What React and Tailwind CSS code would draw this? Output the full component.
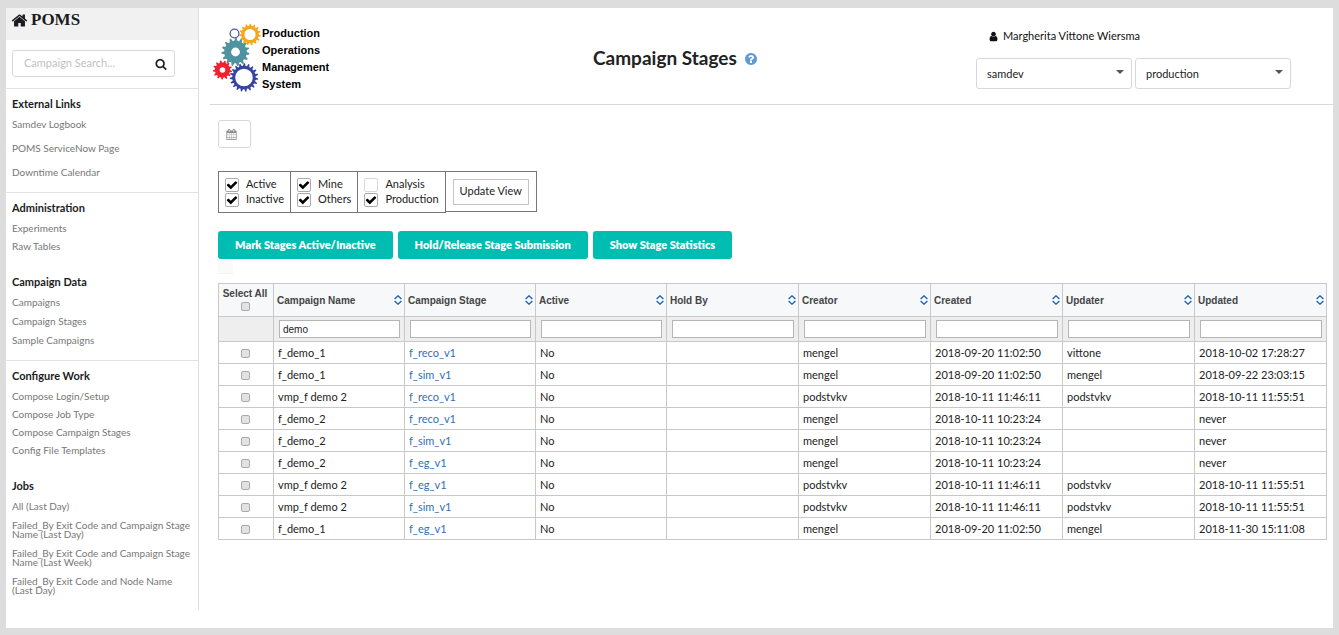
import React from 'react';

const PATHS = {
  home: 'M1472 992v480q0 26-19 45t-45 19h-384v-384h-256v384h-384q-26 0-45-19t-19-45v-480q0-1 .5-3t.5-3l575-474 575 474q1 2 1 6zm223-69l-62 74q-8 9-21 11h-3q-13 0-21-7l-692-577-692 577q-12 8-24 7-13-2-21-11l-62-74q-8-10-7-23.5t11-21.5l719-599q32-26 76-26t76 26l244 204v-195q0-14 9-23t23-9h192q14 0 23 9t9 23v408l219 182q10 8 11 21.5t-7 23.5z',
  search: 'M1216 832q0-185-131.5-316.5t-316.5-131.5-316.5 131.5-131.5 316.5 131.5 316.5 316.5 131.5 316.5-131.5 131.5-316.5zm512 832q0 52-38 90t-90 38q-54 0-90-38l-343-342q-179 124-399 124-143 0-273.5-55.5t-225-150-150-225-55.5-273.5 55.5-273.5 150-225 225-150 273.5-55.5 273.5 55.5 225 150 150 225 55.5 273.5q0 220-124 399l343 343q37 37 37 90z',
  user: 'M1536 1399q0 109-62.5 187t-150.5 78h-854q-88 0-150.5-78t-62.5-187q0-85 8.5-160.5t31.5-152 58.5-131 94-89 134.5-34.5q131 128 313 128t313-128q76 0 134.5 34.5t94 89 58.5 131 31.5 152 8.5 160.5zm-256-887q0 159-112.5 271.5t-271.5 112.5-271.5-112.5-112.5-271.5 112.5-271.5 271.5-112.5 271.5 112.5 112.5 271.5z',
  help: 'M1024 1376v-192q0-14-9-23t-23-9h-192q-14 0-23 9t-9 23v192q0 14 9 23t23 9h192q14 0 23-9t9-23zm256-672q0-88-55.5-163t-138.5-116-170-41q-243 0-371 213-15 24 8 42l132 100q7 6 19 6 16 0 25-12 53-68 86-92 34-24 86-24 48 0 85.5 26t37.5 59q0 38-20 61t-68 45q-63 28-115.5 86.5t-52.5 125.5v36q0 14 9 23t23 9h192q14 0 23-9t9-23q0-19 21.5-49.5t54.5-49.5q32-18 49-28.5t46-35 44.5-48 28-60.5 12.5-81zm384 192q0 209-103 385.5t-279.5 279.5-385.5 103-385.5-103-279.5-279.5-103-385.5 103-385.5 279.5-279.5 385.5-103 385.5 103 279.5 279.5 103 385.5z',
  calendar: 'M192 1664h288v-288h-288v288zm352 0h320v-288h-320v288zm-352-352h288v-320h-288v320zm352 0h320v-320h-320v320zm-352-384h288v-288h-288v288zm736 736h320v-288h-320v288zm-384-736h320v-288h-320v288zm768 736h288v-288h-288v288zm-384-352h320v-320h-320v320zm-352-864v-288q0-13-9.5-22.5t-22.5-9.5h-64q-13 0-22.5 9.5t-9.5 22.5v288q0 13 9.5 22.5t22.5 9.5h64q13 0 22.5-9.5t9.5-22.5zm736 864h288v-320h-288v320zm-384-384h320v-288h-320v288zm384 0h288v-288h-288v288zm32-480v-288q0-13-9.5-22.5t-22.5-9.5h-64q-13 0-22.5 9.5t-9.5 22.5v288q0 13 9.5 22.5t22.5 9.5h64q13 0 22.5-9.5t9.5-22.5zm384-64v1280q0 52-38 90t-90 38h-1408q-52 0-90-38t-38-90v-1280q0-52 38-90t90-38h128v-96q0-66 47-113t113-47h64q66 0 113 47t47 113v96h384v-96q0-66 47-113t113-47h64q66 0 113 47t47 113v96h128q52 0 90 38t38 90z',
  check: 'M1671 566q0 40-28 68l-724 724-136 136q-28 28-68 28t-68-28l-136-136-362-362q-28-28-28-68t28-68l136-136q28-28 68-28t68 28l294 295 656-657q28-28 68-28t68 28l136 136q28 28 28 68z',
};

function Icon({ name, className }) {
  return (
    <svg viewBox="0 0 1792 1792" fill="currentColor" aria-hidden="true" className={className}>
      <path d={PATHS[name]} />
    </svg>
  );
}

function gearPath(cx, cy, outer, root, hole, teeth) {
  const pt = (r, a) => `${(cx + r * Math.cos(a)).toFixed(2)} ${(cy + r * Math.sin(a)).toFixed(2)}`;
  const step = (Math.PI * 2) / teeth;
  let d = '';
  for (let i = 0; i < teeth; i++) {
    const a = i * step;
    d += `${i ? 'L' : 'M'}${pt(root, a)}L${pt(outer, a + step * 0.2)}L${pt(outer, a + step * 0.45)}L${pt(root, a + step * 0.65)}`;
  }
  return `${d}ZM${cx - hole} ${cy}a${hole} ${hole} 0 1 0 ${hole * 2} 0a${hole} ${hole} 0 1 0 ${-hole * 2} 0Z`;
}

function Gears() {
  return (
    <svg viewBox="0 0 48 70" className="h-[70px] w-12 shrink-0" fillRule="evenodd" aria-hidden="true">
      <path d={gearPath(37, 10.5, 10.8, 8.8, 5.6, 15)} fill="#f5a81c" />
      <circle cx="21.5" cy="9.5" r="4.4" fill="none" stroke="#4a5da8" strokeWidth="1.3" />
      <path d={gearPath(22.5, 28, 14, 11.3, 4.4, 15)} fill="#4f93a0" />
      <path d={gearPath(9.5, 46, 9.6, 7.6, 2.8, 13)} fill="#f5202f" />
      <path d={gearPath(31, 53.5, 14.2, 11.7, 8.8, 19)} fill="#3444a0" />
    </svg>
  );
}

const NAV = [
  [
    {
      title: 'External Links',
      gap: 'gap-[15px]',
      links: ['Samdev Logbook', 'POMS ServiceNow Page', 'Downtime Calendar'],
    },
  ],
  [
    { title: 'Administration', gap: 'gap-[9px]', links: ['Experiments', 'Raw Tables'] },
    { title: 'Campaign Data', gap: 'gap-2.5', links: ['Campaigns', 'Campaign Stages', 'Sample Campaigns'] },
  ],
  [
    {
      title: 'Configure Work',
      gap: 'gap-[9px]',
      links: ['Compose Login/Setup', 'Compose Job Type', 'Compose Campaign Stages', 'Config File Templates'],
    },
    {
      title: 'Jobs',
      gap: 'gap-2.5',
      links: [
        'All (Last Day)',
        'Failed_By Exit Code and Campaign Stage Name (Last Day)',
        'Failed_By Exit Code and Campaign Stage Name (Last Week)',
        'Failed_By Exit Code and Node Name (Last Day)',
      ],
    },
  ],
];

function Sidebar() {
  return (
    <aside className="mb-[18px] w-[193px] shrink-0 border-r border-[#dedede]">
      <a href="#home" className="flex h-8 items-center gap-[3px] bg-[#f1f1f1] pb-2 pl-[5px] text-[#1b1c1d]">
        <Icon name="home" className="size-[17px]" />
        <span className="font-['Liberation_Serif',serif] text-[17px] font-bold">POMS</span>
      </a>
      <form className="mx-1.5 mt-2.5 mb-[11px] flex h-[27px] w-[163px] items-center rounded-[3px] border border-[#d8d8d8] pr-[7px]">
        <input
          type="text"
          aria-label="Campaign Search"
          placeholder="Campaign Search..."
          className="w-full min-w-0 flex-1 bg-transparent pl-[11px] text-[11px] outline-none placeholder:text-[#bfbfbf]"
        />
        <button type="button" aria-label="Search" className="text-[#222]">
          <Icon name="search" className="size-3" />
        </button>
      </form>
      <nav>
        {NAV.map((groups) => (
          <div key={groups[0].title} className="flex flex-col gap-[23px] border-t border-[#e3e3e3] px-1.5 pt-[7px] pb-[15px]">
            {groups.map(({ title, gap, links }) => (
              <section key={title}>
                <h2 className="mb-2 text-[11px] leading-4 font-bold text-[#1b1c1d]">{title}</h2>
                <ul className={`flex flex-col ${gap}`}>
                  {links.map((label) => (
                    <li key={label} className="text-[10px] leading-[9px] text-[#777]">
                      <a href="#nav" className="block">{label}</a>
                    </li>
                  ))}
                </ul>
              </section>
            ))}
          </div>
        ))}
      </nav>
    </aside>
  );
}

function Dropdown({ label, value }) {
  return (
    <div className="relative w-[156px]">
      <select
        aria-label={label}
        defaultValue={value}
        className="h-[31px] w-full appearance-none rounded-[3px] border border-[#d8d8d8] bg-white pt-px pl-2.5 text-[11px] text-[#222]"
      >
        <option>{value}</option>
      </select>
      <span className="pointer-events-none absolute top-3 right-2 border-x-4 border-t-4 border-x-transparent border-t-[#555]" />
    </div>
  );
}

function Header() {
  return (
    <header className="ml-[11px] grid h-[97px] grid-cols-[383fr_383fr_357fr] border-b border-[#d8d8d8]">
      <div className="flex items-start gap-px pt-4 pl-[3px]">
        <Gears />
        <div className="flex flex-col pt-px font-['Liberation_Sans',sans-serif] text-[11px] leading-[17px] font-bold text-black">
          <span>Production</span>
          <span>Operations</span>
          <span>Management</span>
          <span>System</span>
        </div>
      </div>
      <div className="flex items-center gap-[7px] pt-1">
        <h1 className="text-[19px] font-bold text-[#222]">Campaign Stages</h1>
        <a href="#help" aria-label="Help" className="pt-0.5 text-[#5a9bd8]">
          <Icon name="help" className="size-3.5" />
        </a>
      </div>
      <div className="pt-5">
        <div className="mb-3.5 ml-3 flex h-4 items-center gap-1 text-[11px] text-[#111]">
          <Icon name="user" className="size-[11px]" />
          <span>Margherita Vittone Wiersma</span>
        </div>
        <div className="flex gap-[3px]">
          <Dropdown label="Experiment" value="samdev" />
          <Dropdown label="Role" value="production" />
        </div>
      </div>
    </header>
  );
}

function FilterCheck({ label, checked }) {
  return (
    <label className="flex h-[15px] items-center">
      <span className="relative mr-[7px] size-3.5">
        <input
          type="checkbox"
          defaultChecked={checked}
          className="peer block size-3.5 appearance-none rounded-[2px] border border-[#d8d8d8] bg-white checked:border-[#aaa]"
        />
        <Icon name="check" className="pointer-events-none absolute inset-px hidden size-3 text-black peer-checked:block" />
      </span>
      {label}
    </label>
  );
}

const FILTERS = [
  [['Active', true], ['Inactive', true]],
  [['Mine', true], ['Others', true]],
  [['Analysis', false], ['Production', true]],
];

function Filters() {
  return (
    <div className="mt-[23px] flex h-[42px] text-[11px] text-[#222]">
      {FILTERS.map((group) => (
        <div key={group[0][0]} className="-mr-px border border-[#777] px-1.5 pt-[5px]">
          {group.map(([label, checked]) => (
            <FilterCheck key={label} label={label} checked={checked} />
          ))}
        </div>
      ))}
      <div className="flex h-[41px] items-center border border-[#777] px-[7px]">
        <button type="button" className="h-[26px] border border-[#c4c4c4] bg-white px-1.5">Update View</button>
      </div>
    </div>
  );
}

const COLUMNS = ['Campaign Name', 'Campaign Stage', 'Active', 'Hold By', 'Creator', 'Created', 'Updater', 'Updated'];

const ROWS = [
  ['f_demo_1', 'f_reco_v1', 'No', '', 'mengel', '2018-09-20 11:02:50', 'vittone', '2018-10-02 17:28:27'],
  ['f_demo_1', 'f_sim_v1', 'No', '', 'mengel', '2018-09-20 11:02:50', 'mengel', '2018-09-22 23:03:15'],
  ['vmp_f demo 2', 'f_reco_v1', 'No', '', 'podstvkv', '2018-10-11 11:46:11', 'podstvkv', '2018-10-11 11:55:51'],
  ['f_demo_2', 'f_reco_v1', 'No', '', 'mengel', '2018-10-11 10:23:24', '', 'never'],
  ['f_demo_2', 'f_sim_v1', 'No', '', 'mengel', '2018-10-11 10:23:24', '', 'never'],
  ['f_demo_2', 'f_eg_v1', 'No', '', 'mengel', '2018-10-11 10:23:24', '', 'never'],
  ['vmp_f demo 2', 'f_eg_v1', 'No', '', 'podstvkv', '2018-10-11 11:46:11', 'podstvkv', '2018-10-11 11:55:51'],
  ['vmp_f demo 2', 'f_sim_v1', 'No', '', 'podstvkv', '2018-10-11 11:46:11', 'podstvkv', '2018-10-11 11:55:51'],
  ['f_demo_1', 'f_eg_v1', 'No', '', 'mengel', '2018-09-20 11:02:50', 'mengel', '2018-11-30 15:11:08'],
];

function RowCheck({ label }) {
  return (
    <input
      type="checkbox"
      aria-label={label}
      className="mx-auto block size-[9px] appearance-none rounded-[2px] border border-[#aaa] bg-[#e2e2e2] checked:bg-[#555]"
    />
  );
}

function SortIcon() {
  return (
    <svg viewBox="0 0 8 10" className="h-2.5 w-2" fill="none" stroke="#1a5fb4" strokeWidth="1.3" aria-hidden="true">
      <path d="M.6 4 4 .8 7.4 4M.6 6 4 9.2 7.4 6" />
    </svg>
  );
}

function StageTable() {
  return (
    <table className="w-full table-fixed border-collapse text-left text-[11px] text-[#222]">
      <colgroup>
        <col className="w-[55px]" />
        {COLUMNS.map((c, i) => <col key={c} className={i < 3 ? 'w-[131px]' : undefined} />)}
      </colgroup>
      <thead className="font-['Liberation_Sans',sans-serif] text-[10px] text-[#444]">
        <tr className="h-[33px] bg-[#f6f8fa]">
          <th className="border border-[#c8c8c8] pt-0 pr-0.5 pb-0.5 pl-0 text-center leading-[13px] whitespace-nowrap">
            <span className="mb-0.5 block">Select All</span>
            <RowCheck label="Select all" />
          </th>
          {COLUMNS.map((c) => (
            <th key={c} className="border border-[#c8c8c8] py-0 pr-0.5 pl-[3px]">
              <button type="button" className="flex w-full items-center justify-between font-bold">
                {c}
                <SortIcon />
              </button>
            </th>
          ))}
        </tr>
        <tr className="h-[25px] bg-[#eee]">
          <td className="border border-[#c8c8c8]" />
          {COLUMNS.map((c, i) => (
            <td key={c} className="border border-[#c8c8c8] py-0 pr-1 pl-[5px]">
              <input
                type="text"
                aria-label={`Filter ${c}`}
                defaultValue={i === 0 ? 'demo' : ''}
                className="block h-[18px] w-full border border-[#b5b5b5] bg-white px-[3px] text-[10px] text-[#222]"
              />
            </td>
          ))}
        </tr>
      </thead>
      <tbody>
        {ROWS.map((row, r) => (
          <tr key={r} className="h-[22px] leading-4">
            <td className="border border-[#c8c8c8] pt-0.5 pr-0.5 pb-0 pl-0"><RowCheck label={`Select ${row[0]} ${row[1]}`} /></td>
            {row.map((cell, i) => (
              <td key={i} className="border border-[#c8c8c8] px-1 py-0">
                {i === 1 ? <a href="#stage" className="text-[#2f6fb8]">{cell}</a> : cell}
              </td>
            ))}
          </tr>
        ))}
      </tbody>
    </table>
  );
}

export default function App() {
  return (
    <div className="flex min-h-screen bg-[#ddd] px-1.5 pt-2 pb-[7px] font-['Lato',sans-serif]">
      <div className="flex min-w-0 flex-1 bg-white">
        <Sidebar />
        <div className="min-w-0 flex-1">
          <Header />
          <main className="pt-[15px] pr-1.5 pl-[19px]">
            <button
              type="button"
              aria-label="Pick dates"
              className="flex h-7 w-[33px] items-center rounded-[3px] border border-[#d8d8d8] pl-[7px] text-[#888]"
            >
              <Icon name="calendar" className="size-[11px]" />
            </button>
            <Filters />
            <div className="mt-[18px] flex gap-[5px]">
              {['Mark Stages Active/Inactive', 'Hold/Release Stage Submission', 'Show Stage Statistics'].map((label) => (
                <button key={label} type="button" className="h-7 rounded-[3px] bg-[#00bdb1] px-[17px] text-[11px] font-extrabold text-white">
                  {label}
                </button>
              ))}
            </div>
            <div className="mb-[9px] size-[15px] border-b border-[#f3f3f3] bg-[#fafafa]" />
            <StageTable />
          </main>
        </div>
      </div>
    </div>
  );
}
